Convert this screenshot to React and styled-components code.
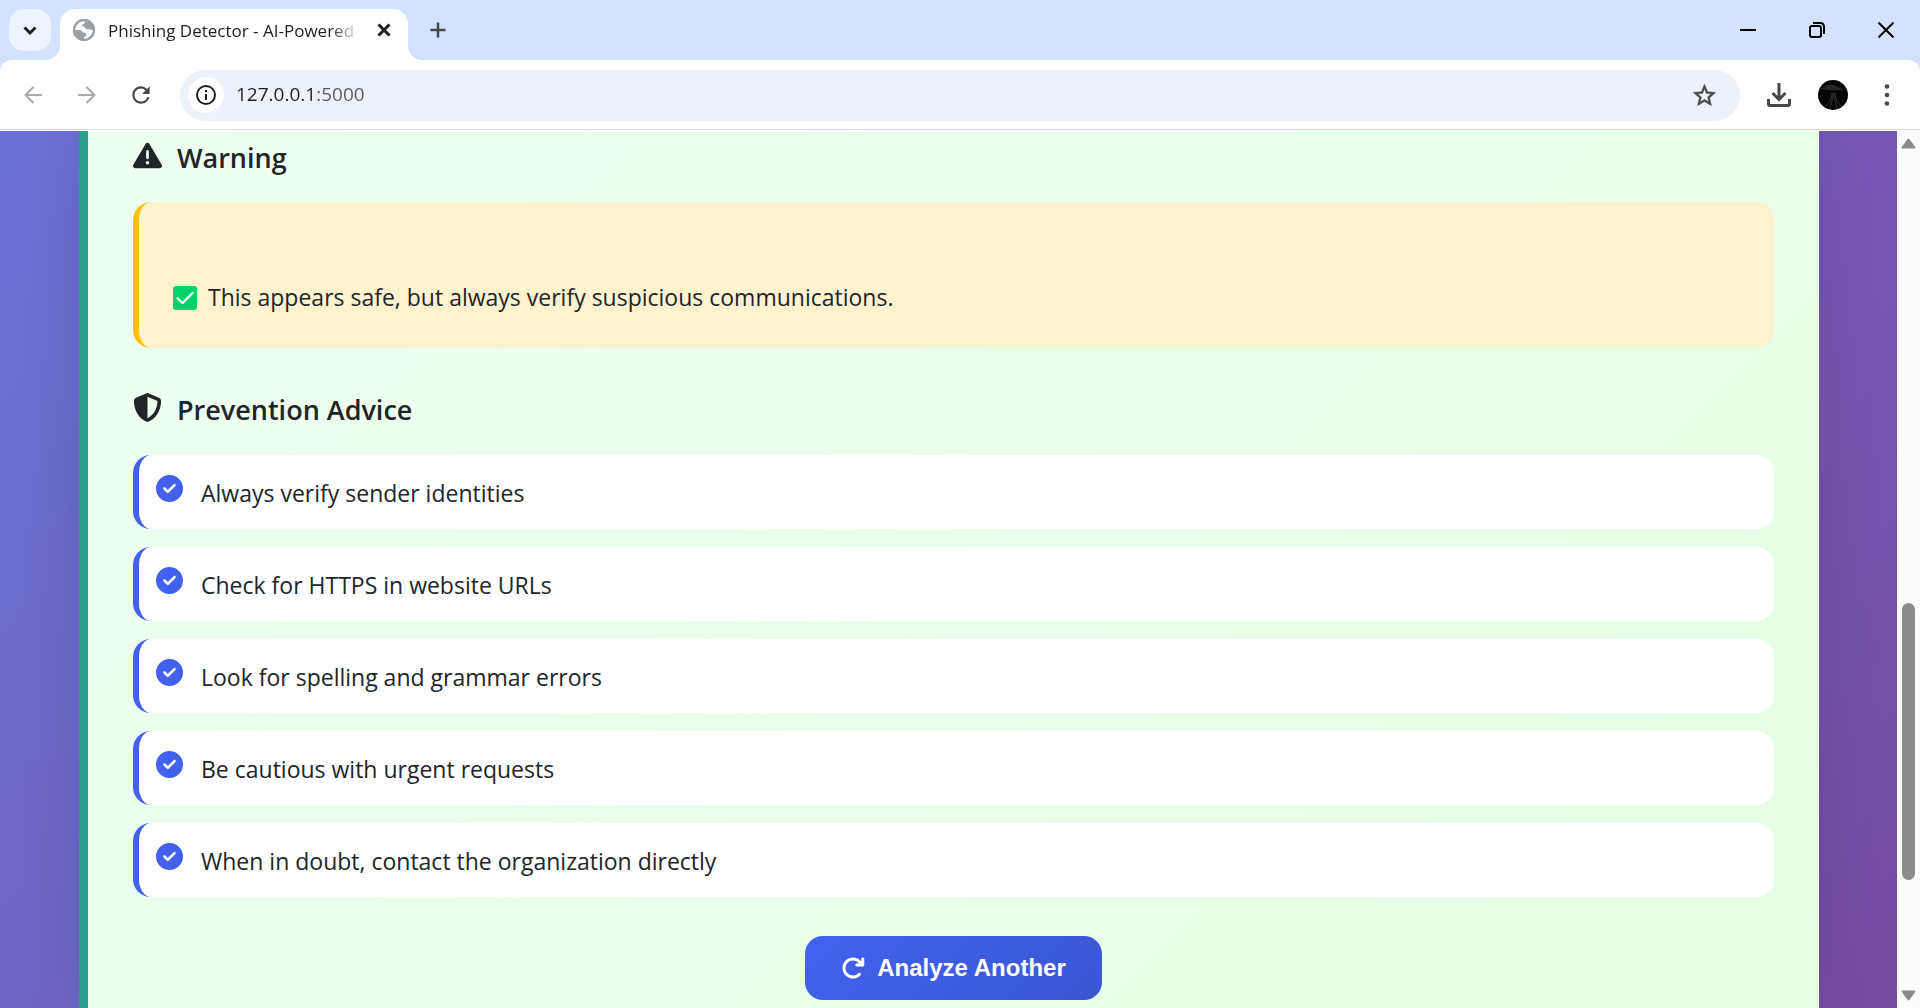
import React from "react";
import styled, { createGlobalStyle } from "styled-components";
import {
  FaTriangleExclamation,
  FaShieldHalved,
  FaCircleCheck,
  FaArrowRotateRight,
} from "react-icons/fa6";

const GlobalStyle = createGlobalStyle`
  *, *::before, *::after { box-sizing: border-box; }
  body {
    margin: 0;
    font-family: "Open Sans", "Noto Sans", sans-serif;
    color: #212529;
    overflow: hidden;
  }
  button, input { font: inherit; color: inherit; border: 0; padding: 0; margin: 0; background: none; }
  h2, p, ul { margin: 0; padding: 0; }
  svg { display: block; flex: none; }
`;

const Window = styled.div`
  height: 100vh;
  display: flex;
  flex-direction: column;
  background: #d3e2fe;
`;

const TabStrip = styled.header`
  height: 60px;
  flex: none;
  display: flex;
  align-items: center;
  padding: 9px 0 0 9px;
`;

const TabSearch = styled.button`
  width: 42px;
  height: 42px;
  margin-bottom: 9px;
  border-radius: 15px;
  background: #ecf2ff;
  display: grid;
  place-items: center;
`;

const Tab = styled.div`
  position: relative;
  width: 348px;
  height: 51px;
  margin-left: 9px;
  padding: 0 12px 9px;
  display: flex;
  align-items: center;
  gap: 12px;
  border-radius: 15px 15px 0 0;
  background: #fff;

  &::before, &::after {
    content: "";
    position: absolute;
    bottom: 0;
    width: 15px;
    height: 15px;
  }
  &::before {
    right: 100%;
    background: radial-gradient(circle at 0 0, transparent 15px, #fff 15px);
  }
  &::after {
    left: 100%;
    background: radial-gradient(circle at 100% 0, transparent 15px, #fff 15px);
  }
`;

const TabTitle = styled.span`
  flex: 1;
  padding-top: 2px;
  white-space: nowrap;
  font-size: 17px;
  line-height: 24px;
  color: #1f1f1f;
  mask-image: linear-gradient(to right, #000 calc(100% - 30px), transparent);
`;

const BareButton = styled.button`
  width: ${(p) => p.$size}px;
  height: ${(p) => p.$size}px;
  flex: none;
  display: grid;
  place-items: center;
  color: ${(p) => p.$color || "#474747"};
`;

const NewTab = styled(BareButton)`
  margin: 0 auto 9px 9px;
`;

const WindowButton = styled.button`
  width: 69px;
  height: 48px;
  margin-bottom: 9px;
  display: grid;
  place-items: center;
  color: #000;
`;

const Toolbar = styled.nav`
  height: 71px;
  flex: none;
  display: flex;
  align-items: center;
  gap: 6px;
  padding: 0 9px 1px;
  background: #fff;
  border-radius: 12px 12px 0 0;
  box-shadow: inset 0 -1px #fff, inset 0 -2px #dcdcdc;
`;

const Omnibox = styled.label`
  flex: 1;
  height: 51px;
  margin: 0 9px;
  padding: 0 18px 0 8px;
  display: flex;
  align-items: center;
  gap: 12px;
  border-radius: 26px;
  background: #ecf1fa;
`;

const SiteInfo = styled.span`
  width: 36px;
  height: 36px;
  border-radius: 50%;
  background: #fff;
  display: grid;
  place-items: center;
  color: #1f1f1f;
`;

const Address = styled.input`
  flex: 1;
  min-width: 0;
  height: 36px;
  padding-bottom: 2px;
  font-size: 19px;
  outline: none;
  background: linear-gradient(to right, #1f1f1f 77px, #5a5a5a 77px);
  background-clip: text;
  color: transparent;
`;

const Viewport = styled.div`
  flex: 1;
  min-height: 0;
  display: flex;
`;

const Page = styled.main`
  flex: 1;
  min-width: 0;
  overflow: hidden;
  padding: 0 78px 0 79px;
  background: linear-gradient(135deg, #6a70d5 0%, #6f65c6 32%, #7457b3 68%, #764ba2 100%);
`;

const Card = styled.section`
  height: 100%;
  padding: 5px 45px 0;
  border-left: 9px solid #2a9d8f;
  background: linear-gradient(135deg, #eefff2 0%, #e9ffeb 50%, #e5ffe5 100%);
  box-shadow: 0 0 60px rgba(0, 0, 0, 0.1);
`;

const SectionTitle = styled.h2`
  display: flex;
  align-items: center;
  gap: 15px;
  height: 44px;
  font-size: 27px;
  font-weight: 600;
  line-height: 44px;

  svg { margin-bottom: 6px; }
`;

const WarningBox = styled.div`
  margin: 22px 0 40px;
  padding: 75px 34px 30px;
  display: flex;
  align-items: center;
  gap: 11px;
  border-left: 6px solid #ffc107;
  border-radius: 18px;
  background: #fff2cf;
  font-size: 23px;
  line-height: 41px;
`;

const AdviceList = styled.ul`
  list-style: none;
  display: flex;
  flex-direction: column;
  gap: 18px;
  margin: 23px 0 39px;
`;

const AdviceItem = styled.li`
  height: 74px;
  padding: 2px 17px 0;
  display: flex;
  align-items: center;
  gap: 18px;
  border-left: 6px solid #4361ee;
  border-radius: 18px;
  background: #fff;
  font-size: 23px;
  line-height: 36px;

  svg { color: #4361ee; margin-bottom: 9px; }
`;

const PrimaryButton = styled.button`
  height: 64px;
  margin: 0 auto;
  padding: 0 36px;
  display: flex;
  align-items: center;
  gap: 12px;
  border-radius: 18px;
  background: linear-gradient(135deg, #4361ee, #3a56d4);
  color: #fff;
  font-family: "Liberation Sans", Arial, sans-serif;
  font-size: 24px;
  font-weight: 700;
`;

const Scrollbar = styled.div`
  width: 23px;
  flex: none;
  display: grid;
  grid-template-rows: 24px 449fr 277fr 104fr 24px;
  justify-items: center;
  align-items: center;
  background: #fcfcfc;
  color: #8b8b8b;
`;

const Thumb = styled.div`
  grid-row: 3;
  width: 13px;
  height: 100%;
  border-radius: 7px;
  background: #8b8b8b;
`;

const ArrowDown = styled.svg`
  grid-row: 5;
`;

const Stroke = ({ size, width = 2, children }) => (
  <svg width={size} height={size} viewBox={`0 0 ${size} ${size}`} fill="none" stroke="currentColor" strokeWidth={width}>
    {children}
  </svg>
);

const Globe = () => (
  <svg width="24" height="24" viewBox="0 0 24 24">
    <circle cx="12" cy="12" r="11" fill="#9aa0a6" />
    <path
      fill="#fff"
      d="M14.500 3.500c-1.200.4-2 .9-2.300 1.900-.3.900-1.900.6-2.300 1.700-.3.900.5 1.700 1.600 1.500 1.600-.2 1.300 1.900 2.700 2.500 1.500.6 3.200-.5 4.200.4.700.7 1.800.5 2.700.6-.1 5.100-4.200 9-9.100 9v-2.100c1.300 0 2.300-.8 2.300-2 0-1.600-1-2.300-2.500-2.400-1-.1-1.400-.6-1.800-1.400-.5-1-1.400-1.300-2.600-1.300H3c.2-5 4.200-9 9.100-9 .9 0 1.700.2 2.400.6z"
    />
    <circle cx="12" cy="12" r="10" fill="none" stroke="#9aa0a6" strokeWidth="2.200" />
  </svg>
);

const Star = () => (
  <svg width="27" height="27" viewBox="0 0 24 24" fill="currentColor" stroke="currentColor" strokeWidth="0.4">
    <path d="M22 9.240l-7.190-.62L12 2 9.190 8.630 2 9.240l5.460 4.730L5.820 21 12 17.270 18.180 21l-1.630-7.030L22 9.240zM12 15.400l-3.760 2.270 1-4.280-3.320-2.880 4.380-.38L12 6.100l1.710 4.040 4.380.38-3.320 2.880 1 4.280L12 15.400z" />
  </svg>
);

const Reload = () => (
  <svg width="26" height="26" viewBox="0 0 24 24" fill="currentColor">
    <path d="M17.650 6.350A7.958 7.958 0 0 0 12 4c-4.420 0-7.990 3.580-7.990 8s3.570 8 7.990 8c3.730 0 6.840-2.550 7.730-6h-2.080A5.990 5.990 0 0 1 12 18c-3.310 0-6-2.690-6-6s2.690-6 6-6c1.660 0 3.140.69 4.220 1.780L13 11h7V4l-2.350 2.350z" />
  </svg>
);

const Avatar = () => (
  <svg width="30" height="30" viewBox="0 0 30 30">
    <circle cx="15" cy="15" r="15" fill="#060606" />
    <path d="M2 9c3-2 5-1 7-4 2 1 4-1 7 0 3 2 6 3 12 5-5-1-8 1-12 0-5 1-9-1-14-1z" fill="#262626" />
    <path d="M14 13c0 6-3 10-7 14M15 13c0 6-2 11-3 16M16 13c0 6 2 11 3 16M17 13c0 6 3 10 7 14" fill="none" stroke="#333" />
  </svg>
);

const CheckMarkBox = () => (
  <svg width="24" height="24" viewBox="0 0 24 24" role="img" aria-label="Safe">
    <rect width="24" height="24" rx="3" fill="#00d26a" />
    <path d="M4.500 12.200l5 4.800L19.500 7" fill="none" stroke="#fff" strokeWidth="2.200" strokeLinecap="round" strokeLinejoin="round" />
  </svg>
);

const ADVICE = [
  "Always verify sender identities",
  "Check for HTTPS in website URLs",
  "Look for spelling and grammar errors",
  "Be cautious with urgent requests",
  "When in doubt, contact the organization directly",
];

function BrowserTabs() {
  return (
    <TabStrip>
      <TabSearch aria-label="Search tabs">
        <Stroke size={18} width={3}><path d="M3.500 6.500L9 12l5.500-5.500" color="#1f1f1f" /></Stroke>
      </TabSearch>
      <Tab>
        <Globe />
        <TabTitle>Phishing Detector - AI-Powered</TabTitle>
        <BareButton $size={24} $color="#1f1f1f" aria-label="Close tab">
          <Stroke size={14} width={3}><path d="M1.500 1.500l11 11M12.500 1.500l-11 11" /></Stroke>
        </BareButton>
      </Tab>
      <NewTab $size={42} aria-label="New tab">
        <Stroke size={16} width={2.5}><path d="M8 0.500v15M0.500 8h15" /></Stroke>
      </NewTab>
      <WindowButton aria-label="Minimize">
        <Stroke size={16}><path d="M0 8h16" /></Stroke>
      </WindowButton>
      <WindowButton aria-label="Restore">
        <Stroke size={16}>
          <rect x="1" y="4" width="11" height="11" rx="2" />
          <path d="M4 1h7.500a3.500 3.500 0 0 1 3.500 3.500V12" />
        </Stroke>
      </WindowButton>
      <WindowButton aria-label="Close">
        <Stroke size={16}><path d="M0.500 0.500l15 15M15.500 0.500l-15 15" /></Stroke>
      </WindowButton>
    </TabStrip>
  );
}

function BrowserToolbar() {
  return (
    <Toolbar>
      <BareButton $size={48} $color="#a9a9a9" aria-label="Back">
        <Stroke size={18}><path d="M18 9H1.500M9.500 1L1.500 9l8 8" /></Stroke>
      </BareButton>
      <BareButton $size={48} $color="#a9a9a9" aria-label="Forward">
        <Stroke size={18}><path d="M0 9h16.500M8.500 1l8 8-8 8" /></Stroke>
      </BareButton>
      <BareButton $size={48} aria-label="Reload"><Reload /></BareButton>
      <Omnibox>
        <SiteInfo>
          <Stroke size={20} width={2}>
            <circle cx="10" cy="10" r="9" />
            <path d="M10 9v6M10 5v2.200" />
          </Stroke>
        </SiteInfo>
        <Address aria-label="Address" defaultValue="127.0.0.1:5000" />
        <BareButton $size={36} aria-label="Bookmark this page"><Star /></BareButton>
      </Omnibox>
      <BareButton $size={48} aria-label="Downloads">
        <Stroke size={24} width={3}>
          <path d="M12 0v16M5.500 10l6.500 6.500 6.500-6.500M1.500 16v5q0 1.500 1.500 1.500h18q1.500 0 1.500-1.500v-5" />
        </Stroke>
      </BareButton>
      <BareButton $size={48} aria-label="Profile"><Avatar /></BareButton>
      <BareButton $size={48} aria-label="Menu">
        <svg width="24" height="24" viewBox="0 0 24 24" fill="currentColor">
          <circle cx="12" cy="3.500" r="2.300" />
          <circle cx="12" cy="12" r="2.300" />
          <circle cx="12" cy="20.500" r="2.300" />
        </svg>
      </BareButton>
    </Toolbar>
  );
}

export default function App() {
  return (
    <Window>
      <GlobalStyle />
      <BrowserTabs />
      <BrowserToolbar />
      <Viewport>
        <Page>
          <Card>
            <SectionTitle><FaTriangleExclamation size={29} />Warning</SectionTitle>
            <WarningBox>
              <CheckMarkBox />
              <p>This appears safe, but always verify suspicious communications.</p>
            </WarningBox>
            <SectionTitle><FaShieldHalved size={29} />Prevention Advice</SectionTitle>
            <AdviceList>
              {ADVICE.map((tip) => (
                <AdviceItem key={tip}><FaCircleCheck size={27} />{tip}</AdviceItem>
              ))}
            </AdviceList>
            <PrimaryButton><FaArrowRotateRight size={24} />Analyze Another</PrimaryButton>
          </Card>
        </Page>
        <Scrollbar aria-hidden="true">
          <svg width="15" height="11" viewBox="0 0 15 11"><path d="M7.500 1.500L13.500 9.500h-12z" fill="currentColor" stroke="currentColor" strokeWidth="2" strokeLinejoin="round" /></svg>
          <Thumb />
          <ArrowDown width="15" height="11" viewBox="0 0 15 11"><path d="M7.500 9.500L1.500 1.500h12z" fill="currentColor" stroke="currentColor" strokeWidth="2" strokeLinejoin="round" /></ArrowDown>
        </Scrollbar>
      </Viewport>
    </Window>
  );
}
